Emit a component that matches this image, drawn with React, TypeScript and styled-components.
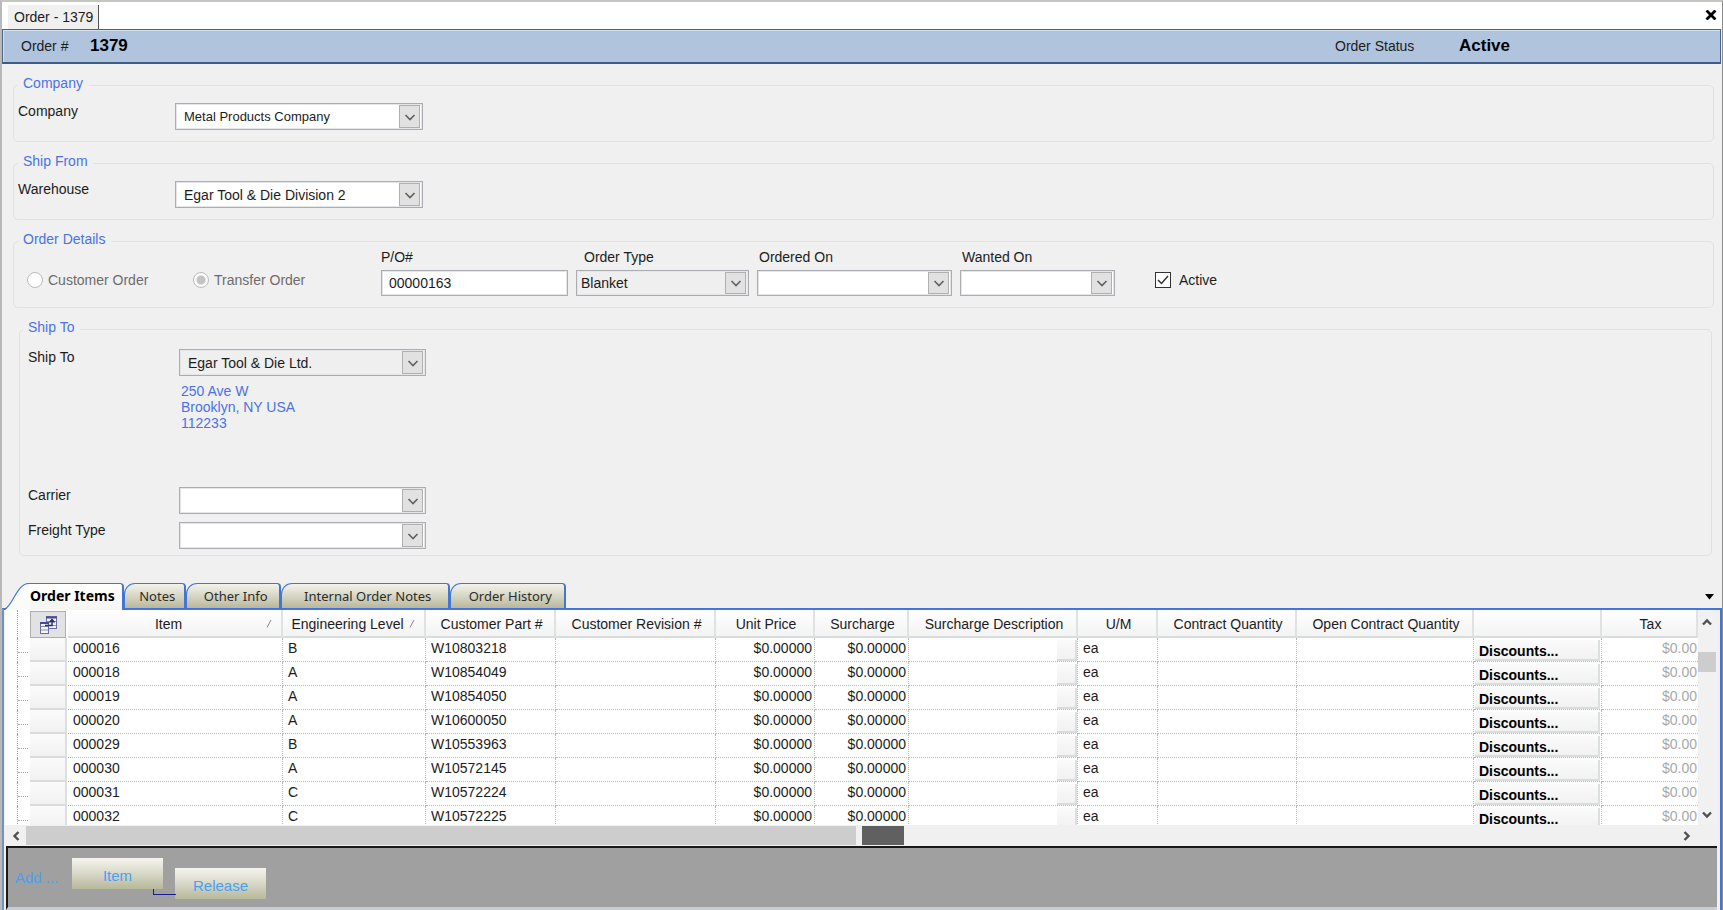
import React from "react";
import styled, { createGlobalStyle, css } from "styled-components";

const BLUE = "#4374d8";
const LINE = "#d9e3e8";
const LINK = "#4a73e8";

const GlobalStyle = createGlobalStyle`
  * { box-sizing: border-box; }
  body { margin: 0; background: #f0f0f0; }
  body, button, input, select { font-family: "Liberation Sans", Arial, sans-serif; font-size: 14px; color: #1c1c1c; }
`;

const Window = styled.div`
  min-height: 100vh;
  display: flex;
  flex-direction: column;
  background: #f0f0f0;
  border-top: 2px solid #c4c4c0;
  border-left: 2px solid #b9b9bb;
  border-right: 1px solid #8c8c8c;
`;

const DocumentStrip = styled.nav`
  height: 27px;
  display: flex;
  align-items: flex-end;
  justify-content: space-between;
  padding: 0 5px 0 6px;
  background: #fff;
`;

const DocumentTab = styled.button`
  height: 24px;
  padding: 0 5px 0 6px;
  border: 0;
  border-right: 1px solid #555;
  background: #f0f0f0;
  line-height: 23px;
`;

const CloseButton = styled.button`
  display: flex;
  padding: 0;
  margin-bottom: 9px;
  border: 0;
  background: none;
`;

const OrderBar = styled.header`
  height: 35px;
  display: flex;
  align-items: center;
  padding: 0 18px;
  margin-right: 1px;
  border: 1px solid #486684;
  border-bottom: 2px solid #3f5c86;
  box-shadow: inset 1px 1px 0 #d3e1ee;
  background: #b0c4de;
`;

const BarLabel = styled.span`
  width: ${(p: { $w: number }) => p.$w}px;
`;

const BarValue = styled.strong`
  font-size: 17px;
  color: #000;
`;

const StatusGroup = styled.div`
  display: flex;
  align-items: center;
  width: 367px;
  margin-left: auto;
`;

const Form = styled.form`
  display: flex;
  flex-direction: column;
  gap: 11px;
  padding: 11px 8px 27px 11px;
`;

const Group = styled.fieldset<{ $inset?: boolean }>`
  min-width: 0;
  margin: 0 ${(p) => (p.$inset ? 2 : 0)}px 0 ${(p) => (p.$inset ? 6 : 0)}px;
  padding: ${(p) => (p.$inset ? "10px 8px 6px" : "8px 4px 11px")};
  border: 1px solid ${LINE};
  border-radius: 5px;
`;

const Legend = styled.legend`
  margin-left: ${(p: { $inset?: boolean }) => (p.$inset ? -5 : 0)}px;
  padding: 0 6px 4px 5px;
  line-height: 16px;
  color: ${LINK};
`;

const FieldRow = styled.div<{ $labelWidth: number }>`
  display: grid;
  grid-template-columns: ${(p) => p.$labelWidth}px auto;
  justify-content: start;
  align-items: start;
`;

const Label = styled.label`
  line-height: 16px;
`;

const box = css`
  width: 100%;
  border: 1px solid #abadb3;
  border-radius: 0;
  outline: 0;
  box-shadow: inset 0 0 0 1px #e4e6ea;
`;

const SelectFrame = styled.div<{ $width: number }>`
  position: relative;
  width: ${(p) => p.$width}px;
`;

const SelectBox = styled.select<{ $grey?: boolean; $dense?: boolean; $tight?: boolean }>`
  ${box}
  display: block;
  appearance: none;
  height: ${(p) => (p.$tight ? 26 : 27)}px;
  padding: 0 24px 0 ${(p) => (p.$tight ? 4 : 8)}px;
  background: ${(p) => (p.$grey ? "#efefef" : "#fff")};
  font-size: ${(p) => (p.$dense ? 13 : 14)}px;
`;

const DropMark = styled.span`
  position: absolute;
  top: 2px;
  right: 3px;
  bottom: 2px;
  width: 21px;
  display: flex;
  align-items: center;
  justify-content: center;
  border: 1px solid #b0b0b0;
  background: #e1e1e1;
  pointer-events: none;
`;

const TextBox = styled.input`
  ${box}
  height: 26px;
  padding: 0 7px;
  background: #fff;
`;

const Address = styled.address`
  margin: -1px 0 48px 153px;
  font-style: normal;
  line-height: 16px;
  color: ${LINK};
`;

const ShipRows = styled.div`
  display: flex;
  flex-direction: column;
  gap: 8px;
`;

const DetailsRow = styled.div`
  display: flex;
  align-items: flex-end;
  gap: 8px;
  margin-top: -9px;
  padding-left: 9px;
`;

const Choice = styled.label<{ $width?: number; $muted?: boolean; $gap?: number }>`
  display: flex;
  align-items: center;
  gap: 5px;
  height: 32px;
  width: ${(p) => (p.$width ? p.$width + "px" : "auto")};
  margin-left: ${(p) => p.$gap ?? 0}px;
  color: ${(p) => (p.$muted ? "#6d6d6d" : "#1c1c1c")};
`;

const Radio = styled.input`
  appearance: none;
  width: 16px;
  height: 16px;
  margin: 0;
  border: 1px solid #bcbcbc;
  border-radius: 50%;
  background: #fff;
  &:checked {
    background: radial-gradient(circle, #c4c4c4 0 4px, #fbfbfb 5px);
  }
`;

const CheckFrame = styled.span`
  position: relative;
  display: flex;
  margin-right: 3px;
  svg { position: absolute; top: 3px; left: 2px; pointer-events: none; }
`;

const Check = styled.input`
  appearance: none;
  width: 16px;
  height: 16px;
  margin: 0;
  border: 1px solid #333;
  background: #fff;
`;

const Stacked = styled.div<{ $width: number; $indent?: number }>`
  width: ${(p) => p.$width}px;
  > label {
    display: block;
    padding-left: ${(p) => p.$indent ?? 0}px;
    margin-bottom: 6px;
    line-height: 14px;
  }
`;

const TabStrip = styled.div`
  display: flex;
  align-items: stretch;
  height: 25px;
  padding-left: 3px;
`;

const ActiveTab = styled.button`
  position: relative;
  z-index: 1;
  display: flex;
  margin: 0 0 -2px;
  padding: 0;
  border: 0;
  background: none;
  color: #000;
  font: bold 14px/24px "Noto Sans", sans-serif;
`;

const ActiveFace = styled.span`
  height: 27px;
  padding-right: 7px;
  border-top: 1px solid ${BLUE};
  border-right: 2px solid ${BLUE};
  border-top-right-radius: 4px;
  background: linear-gradient(#fff, #f5f5f2);
`;

const Tab = styled.button<{ $width: number }>`
  width: ${(p) => p.$width}px;
  padding: 0 0 0 6px;
  border: 1px solid ${BLUE};
  border-right-width: 2px;
  border-bottom: 0;
  border-radius: 11px 4px 0 0;
  background: linear-gradient(#f3f3ec, #d6d6c4 50%, #b9b89c);
  font: 13px/22px "Noto Sans", sans-serif;
  color: #2c2c2c;
`;

const TabMenu = styled.button`
  align-self: center;
  display: flex;
  margin-left: auto;
  padding: 2px 8px 0 0;
  border: 0;
  background: none;
`;

const ItemsPanel = styled.section`
  flex: 1;
  display: flex;
  flex-direction: column;
  border: 2px solid ${BLUE};
  border-left-color: #6f93c2;
  border-bottom: 0;
  padding: 0 3px 0 1px;
`;

const GridArea = styled.div`
  display: grid;
  grid-template-columns: minmax(0, 1fr) 19px;
  height: 215px;
`;

const GridView = styled.div`
  overflow: hidden;
  background: #fff;
`;

const Table = styled.table`
  width: 100%;
  table-layout: fixed;
  border-collapse: separate;
  border-spacing: 0;
`;

const HeadCell = styled.th<{ $plain?: boolean }>`
  height: 28px;
  padding: 2px 0 0;
  font-weight: normal;
  white-space: nowrap;
  background: linear-gradient(#fff, #f3f3f3);
  border-right: 2px solid #dfe2e2;
  border-bottom: 2px solid #d8dcdc;
  ${(p) =>
    p.$plain &&
    css`
      padding: 0;
      background: #fff;
      border: 0;
    `}
`;

const HeadText = styled.div`
  display: flex;
  align-items: center;
  padding-left: 3px;
  span { flex: 1; text-align: center; }
  svg { margin-right: 9px; }
`;

const ChooserButton = styled.button`
  display: flex;
  align-items: center;
  justify-content: center;
  width: 36px;
  height: 27px;
  margin: 1px 0 0;
  padding: 0;
  border: 1px solid #adadad;
  background: #e2e2e2;
`;

const Cell = styled.td<{ $align?: "right"; $muted?: boolean }>`
  height: 24px;
  padding: 1px 2px 0 5px;
  vertical-align: top;
  line-height: 18px;
  white-space: nowrap;
  border-right: 1px dotted #b8b8b8;
  border-bottom: 1px dotted #b8b8b8;
  text-align: ${(p) => p.$align ?? "left"};
  color: ${(p) => (p.$muted ? "#a8a8a8" : "#1c1c1c")};
  &:last-child { border-right: 0; padding-right: 1px; }
`;

const PlainCell = styled.td`
  height: 24px;
  padding: 0;
  vertical-align: top;
`;

const Trunk = styled.div`
  height: 28px;
  margin-left: 12px;
  border-left: 1px dotted #a0a0a0;
`;

const Branch = styled(Trunk)`
  height: 24px;
  &::before {
    content: "";
    display: block;
    width: 10px;
    height: 14px;
    border-bottom: 1px dotted #a0a0a0;
  }
`;

const raised = css`
  display: block;
  padding: 0;
  border: 0;
  border-right: 2px solid #dcdfdf;
  border-bottom: 2px solid #d8dcdc;
  background: linear-gradient(#fbfbfb, #f1f1f1);
`;

const RowSelector = styled.button`
  ${raised}
  width: 37px;
  height: 24px;
`;

const EllipsisButton = styled.button`
  ${raised}
  width: 20px;
  height: 21px;
  margin-left: auto;
`;

const DiscountButton = styled.button`
  ${raised}
  width: 125px;
  height: 21px;
  padding: 3px 0 0 4px;
  text-align: left;
  font-weight: bold;
  line-height: 16px;
  color: #000;
`;

const ButtonCell = styled(Cell)`
  padding: 2px 0 0 1px;
`;

const VerticalBar = styled.div`
  display: flex;
  flex-direction: column;
  background: #f1f1f1;
`;

const ScrollArrow = styled.button`
  display: flex;
  align-items: center;
  justify-content: center;
  flex: none;
  width: 21px;
  height: 20px;
  padding: 0;
  border: 0;
  background: none;
`;

const UpArrow = styled(ScrollArrow)`
  width: 17px;
  height: 23px;
`;

const DownArrow = styled(ScrollArrow)`
  width: 17px;
`;

const VThumb = styled.div`
  height: 20px;
  margin: 19px 1px auto 0;
  background: #cdcdcd;
`;

const HorizontalBar = styled.div`
  display: flex;
  align-items: center;
  height: 21px;
  padding-right: 20px;
  background: #f0f0f0;
`;

const HTrack = styled.div`
  flex: 1;
  display: flex;
  gap: 6px;
  height: 19px;
`;

const HPart = styled.div<{ $dark?: boolean }>`
  width: ${(p) => (p.$dark ? "42px" : "50.3%")};
  background: ${(p) => (p.$dark ? "#606060" : "#cdcdcd")};
`;

const AddBar = styled.footer`
  flex: 1;
  display: flex;
  align-items: flex-start;
  min-height: 62px;
  margin-left: 1px;
  padding: 10px 7px 0;
  border-top: 2px solid #181818;
  border-left: 2px solid #181818;
  border-bottom: 3px solid #c9cdd1;
  background: #a0a0a0;
`;

const AddLabel = styled.span`
  width: 57px;
  line-height: 40px;
  font-size: 15px;
  color: #4a9ff5;
`;

const AddButton = styled.button<{ $child?: boolean }>`
  position: relative;
  width: 91px;
  height: 31px;
  margin: ${(p) => (p.$child ? "10px 0 0 12px" : "0")};
  padding: 3px 0 0;
  border: 0;
  background: linear-gradient(#f5f5ee, #d8d8c8 50%, #b8b89a);
  font-size: 15px;
  color: #4a9ff5;
  ${(p) =>
    p.$child &&
    css`
      &::before {
        content: "";
        position: absolute;
        left: -22px;
        top: 21px;
        width: 22px;
        height: 5px;
        border-left: 1px solid #1c1c8c;
        border-bottom: 1px solid #1c1c8c;
      }
    `}
`;

type Direction = "up" | "down" | "left" | "right";
const turn: Record<Direction, number> = { down: 0, left: 90, up: 180, right: 270 };

function Chevron({ to, bold }: { to: Direction; bold?: boolean }) {
  return (
    <svg width="12" height="12" viewBox="0 0 12 12" aria-hidden="true">
      <path
        d={bold ? "M2 3.5l4 4L10 3.5" : "M1.5 4l4.5 4.5L10.5 4"}
        fill="none"
        stroke={bold ? "#505050" : "#606060"}
        strokeWidth={bold ? 2.4 : 1.6}
        transform={`rotate(${turn[to]} 6 6)`}
      />
    </svg>
  );
}

interface DropDownProps {
  id: string;
  value?: string;
  width: number;
  grey?: boolean;
  dense?: boolean;
  tight?: boolean;
}

function DropDown({ id, value = "", width, grey, dense, tight }: DropDownProps) {
  return (
    <SelectFrame $width={width}>
      <SelectBox id={id} defaultValue={value} $grey={grey} $dense={dense} $tight={tight}>
        <option value={value}>{value}</option>
      </SelectBox>
      <DropMark>
        <Chevron to="down" />
      </DropMark>
    </SelectFrame>
  );
}

const columns: { name: string; width?: number; sorted?: boolean }[] = [
  { name: "Item", width: 215, sorted: true },
  { name: "Engineering Level", width: 143, sorted: true },
  { name: "Customer Part #", width: 130 },
  { name: "Customer Revision #", width: 160 },
  { name: "Unit Price", width: 99 },
  { name: "Surcharge", width: 94 },
  { name: "Surcharge Description", width: 169 },
  { name: "U/M", width: 80 },
  { name: "Contract Quantity", width: 139 },
  { name: "Open Contract Quantity", width: 177 },
  { name: "", width: 128 },
  { name: "Tax" },
];

const rows = [
  ["000016", "B", "W10803218"],
  ["000018", "A", "W10854049"],
  ["000019", "A", "W10854050"],
  ["000020", "A", "W10600050"],
  ["000029", "B", "W10553963"],
  ["000030", "A", "W10572145"],
  ["000031", "C", "W10572224"],
  ["000032", "C", "W10572225"],
];

const tabs = [
  { name: "Notes", width: 62 },
  { name: "Other Info", width: 95 },
  { name: "Internal Order Notes", width: 169 },
  { name: "Order History", width: 116 },
];

function SortMark() {
  return (
    <svg width="6" height="10" viewBox="0 0 6 10" aria-hidden="true">
      <path d="M1 8.5L5 1" stroke="#8c8c8c" strokeWidth="1" />
    </svg>
  );
}

function ChooserIcon() {
  return (
    <svg width="19" height="18" viewBox="0 0 19 18" aria-hidden="true">
      <rect x="7.500" y="0.500" width="10" height="12" fill="#f4f4fc" stroke="#6a6aa8" />
      <path d="M7 1.500h11" stroke="#4a4a90" strokeWidth="2" />
      <path d="M8 5.500h9M8 9.500h9" stroke="#8a8abc" />
      <rect x="1.500" y="6.500" width="8" height="11" fill="#f4f4fc" stroke="#6a6aa8" />
      <path d="M1 7h9" stroke="#4a4a90" strokeWidth="2" />
      <path d="M2 10.500h7M2 14h7" stroke="#8a8abc" />
      <path d="M6 9.500h7V4M10.500 6.500L13 3.500l2.500 3" fill="none" stroke="#2c2c68" strokeWidth="1.500" />
    </svg>
  );
}

function ItemsTable() {
  return (
    <Table>
      <colgroup>
        <col style={{ width: 25 }} />
        <col style={{ width: 38 }} />
        {columns.map((c, i) => (
          <col key={i} style={{ width: c.width }} />
        ))}
      </colgroup>
      <thead>
        <tr>
          <HeadCell $plain>
            <Trunk />
          </HeadCell>
          <HeadCell $plain>
            <ChooserButton type="button" aria-label="Choose columns">
              <ChooserIcon />
            </ChooserButton>
          </HeadCell>
          {columns.map((c, i) => (
            <HeadCell key={i} scope="col">
              <HeadText>
                <span>{c.name}</span>
                {c.sorted && <SortMark />}
              </HeadText>
            </HeadCell>
          ))}
        </tr>
      </thead>
      <tbody>
        {rows.map(([item, level, part]) => (
          <tr key={item}>
            <PlainCell>
              <Branch />
            </PlainCell>
            <PlainCell>
              <RowSelector type="button" aria-label={`Select ${item}`} />
            </PlainCell>
            <Cell>{item}</Cell>
            <Cell>{level}</Cell>
            <Cell>{part}</Cell>
            <Cell />
            <Cell $align="right">$0.00000</Cell>
            <Cell $align="right">$0.00000</Cell>
            <ButtonCell>
              <EllipsisButton type="button" aria-label={`Surcharge description for ${item}`} />
            </ButtonCell>
            <Cell>ea</Cell>
            <Cell />
            <Cell />
            <ButtonCell>
              <DiscountButton type="button">Discounts...</DiscountButton>
            </ButtonCell>
            <Cell $align="right" $muted>
              $0.00
            </Cell>
          </tr>
        ))}
      </tbody>
    </Table>
  );
}

export default function App() {
  return (
    <Window>
      <GlobalStyle />
      <DocumentStrip>
        <DocumentTab type="button">Order - 1379</DocumentTab>
        <CloseButton type="button" aria-label="Close">
          <svg width="12" height="10" viewBox="0 0 12 10" aria-hidden="true">
            <path d="M1.5 0.5l9 9M10.5 0.5l-9 9" stroke="#000" strokeWidth="2.8" />
          </svg>
        </CloseButton>
      </DocumentStrip>
      <OrderBar>
        <BarLabel $w={69}>Order #</BarLabel>
        <BarValue>1379</BarValue>
        <StatusGroup>
          <BarLabel $w={124}>Order Status</BarLabel>
          <BarValue>Active</BarValue>
        </StatusGroup>
      </OrderBar>

      <Form>
        <Group>
          <Legend>Company</Legend>
          <FieldRow $labelWidth={157}>
            <Label htmlFor="company">Company</Label>
            <DropDown id="company" value="Metal Products Company" width={248} dense />
          </FieldRow>
        </Group>

        <Group>
          <Legend>Ship From</Legend>
          <FieldRow $labelWidth={157}>
            <Label htmlFor="warehouse">Warehouse</Label>
            <DropDown id="warehouse" value="Egar Tool & Die Division 2" width={248} />
          </FieldRow>
        </Group>

        <Group>
          <Legend>Order Details</Legend>
          <DetailsRow>
            <Choice $width={158} $muted>
              <Radio type="radio" name="kind" disabled />
              Customer Order
            </Choice>
            <Choice $width={180} $muted>
              <Radio type="radio" name="kind" defaultChecked disabled />
              Transfer Order
            </Choice>
            <Stacked $width={187}>
              <label htmlFor="po">P/O#</label>
              <TextBox id="po" defaultValue="00000163" />
            </Stacked>
            <Stacked $width={173} $indent={8}>
              <label htmlFor="type">Order Type</label>
              <DropDown id="type" value="Blanket" width={173} grey tight />
            </Stacked>
            <Stacked $width={195} $indent={2}>
              <label htmlFor="ordered">Ordered On</label>
              <DropDown id="ordered" width={195} tight />
            </Stacked>
            <Stacked $width={155} $indent={2}>
              <label htmlFor="wanted">Wanted On</label>
              <DropDown id="wanted" width={155} tight />
            </Stacked>
            <Choice $gap={32}>
              <CheckFrame>
                <Check type="checkbox" defaultChecked />
                <svg width="12" height="10" viewBox="0 0 12 10" aria-hidden="true">
                  <path d="M1 5l3.5 3.5L11 1" fill="none" stroke="#333" strokeWidth="1.5" />
                </svg>
              </CheckFrame>
              Active
            </Choice>
          </DetailsRow>
        </Group>

        <Group $inset>
          <Legend $inset>Ship To</Legend>
          <ShipRows>
            <FieldRow $labelWidth={151}>
              <Label htmlFor="shipto">Ship To</Label>
              <DropDown id="shipto" value="Egar Tool & Die Ltd." width={247} grey />
            </FieldRow>
            <Address>
              250 Ave W
              <br />
              Brooklyn, NY USA
              <br />
              112233
            </Address>
            <FieldRow $labelWidth={151}>
              <Label htmlFor="carrier">Carrier</Label>
              <DropDown id="carrier" width={247} />
            </FieldRow>
            <FieldRow $labelWidth={151}>
              <Label htmlFor="freight">Freight Type</Label>
              <DropDown id="freight" width={247} />
            </FieldRow>
          </ShipRows>
        </Group>
      </Form>

      <TabStrip role="tablist">
        <ActiveTab type="button" role="tab" aria-selected="true">
          <svg width="25" height="27" viewBox="0 0 25 27" aria-hidden="true">
            <path d="M0 27C8 22 12 .5 24 .5H25V27Z" fill="#fbfbf9" />
            <path d="M0 26C8 22 12 .5 24 .5H25" fill="none" stroke={BLUE} strokeWidth="1.2" />
          </svg>
          <ActiveFace>Order Items</ActiveFace>
        </ActiveTab>
        {tabs.map((t) => (
          <Tab key={t.name} type="button" role="tab" aria-selected="false" $width={t.width}>
            {t.name}
          </Tab>
        ))}
        <TabMenu type="button" aria-label="List tabs">
          <svg width="9" height="6" viewBox="0 0 9 6" aria-hidden="true">
            <path d="M0 0H9L4.5 5.5Z" fill="#000" />
          </svg>
        </TabMenu>
      </TabStrip>

      <ItemsPanel>
        <GridArea>
          <GridView>
            <ItemsTable />
          </GridView>
          <VerticalBar>
            <UpArrow type="button" aria-label="Scroll up">
              <Chevron to="up" bold />
            </UpArrow>
            <VThumb />
            <DownArrow type="button" aria-label="Scroll down">
              <Chevron to="down" bold />
            </DownArrow>
          </VerticalBar>
        </GridArea>
        <HorizontalBar>
          <ScrollArrow type="button" aria-label="Scroll left">
            <Chevron to="left" bold />
          </ScrollArrow>
          <HTrack>
            <HPart />
            <HPart $dark />
          </HTrack>
          <ScrollArrow type="button" aria-label="Scroll right">
            <Chevron to="right" bold />
          </ScrollArrow>
        </HorizontalBar>
        <AddBar>
          <AddLabel>Add ...</AddLabel>
          <AddButton type="button">Item</AddButton>
          <AddButton type="button" $child>
            Release
          </AddButton>
        </AddBar>
      </ItemsPanel>
    </Window>
  );
}
